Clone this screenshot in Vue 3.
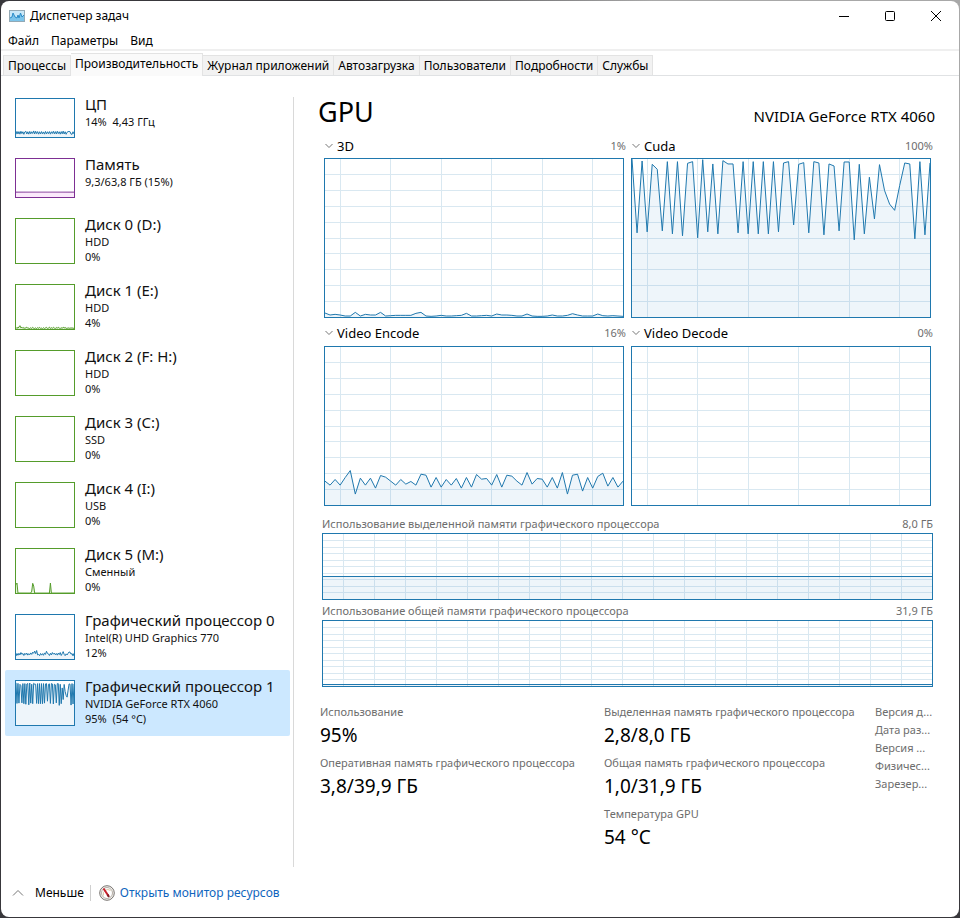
<script setup>
import { ref } from 'vue'

// Charts share one coordinate space: 59 steps across, 477 units down from the top edge.
const SPAN = 59
const DEPTH = 477

const cuda = [0, 223, 6, 220, 16, 31, 217, 8, 226, 8, 232, 13, 8, 238, 2, 220, 15, 226, 5, 15, 15, 223, 8, 226, 8, 226, 8, 226, 8, 220, 12, 8, 199, 16, 11, 223, 8, 12, 229, 15, 21, 217, 9, 9, 244, 16, 226, 55, 181, 17, 95, 136, 155, 80, 12, 15, 241, 8, 229, 12]
const encode = [405, 417, 400, 417, 394, 373, 444, 396, 417, 396, 426, 388, 393, 405, 417, 400, 414, 406, 417, 384, 387, 423, 394, 423, 400, 417, 397, 426, 394, 423, 385, 399, 397, 417, 385, 423, 387, 390, 405, 417, 379, 414, 397, 399, 423, 394, 426, 379, 444, 387, 384, 435, 394, 426, 391, 381, 420, 394, 423, 405]
const fromHeights = (list) => list.map((h) => DEPTH - h)
const render3d = fromHeights([12, 6, 8, 6, 3, 3, 14, 3, 8, 6, 6, 14, 3, 4, 5, 5, 5, 5, 11, 14, 3, 2, 3, 5, 3, 3, 4, 5, 11, 3, 3, 4, 5, 3, 9, 6, 6, 5, 3, 3, 9, 3, 2, 2, 3, 6, 3, 3, 5, 10, 6, 3, 3, 3, 9, 4, 3, 4, 3, 2])
const cpu = fromHeights([34, 70, 38, 68, 36, 72, 42, 66, 34, 64, 72, 38, 66, 36, 70, 40, 66, 44, 76, 38, 72, 42, 68, 36, 66, 38, 68, 40, 64, 36, 70, 38, 66, 42, 68, 36, 66, 44, 72, 40, 68, 38, 72, 42, 66, 36, 68, 40, 74, 38, 66, 34, 60, 68, 70, 66, 36, 34, 66, 38])
const uhd = fromHeights([32, 60, 40, 62, 44, 70, 50, 60, 38, 62, 48, 64, 42, 58, 46, 66, 50, 74, 62, 86, 58, 92, 44, 50, 36, 60, 42, 58, 40, 66, 50, 84, 60, 56, 38, 62, 44, 70, 52, 64, 46, 60, 42, 64, 48, 70, 38, 58, 80, 50, 36, 56, 44, 62, 76, 74, 52, 60, 34, 62])
const diskE = fromHeights([4, 18, 8, 22, 36, 12, 20, 8, 16, 6, 14, 20, 8, 10, 4, 14, 6, 18, 8, 6, 12, 4, 16, 8, 18, 6, 10, 4, 14, 6, 12, 18, 6, 10, 20, 6, 14, 8, 18, 10, 6, 16, 8, 20, 10, 6, 14, 6, 20, 12, 16, 8, 6, 14, 6, 12, 8, 14, 6, 10])
const diskM = fromHeights(Array.from({ length: 60 }, (_, i) => ({ 0: 90, 1: 108, 16: 20, 17: 105, 18: 75, 35: 108 })[i] ?? 0))
const flat = (depth) => Array(60).fill(depth)

const line = (points) => 'M' + points.map((y, x) => `${x} ${y}`).join('L')
const area = (points) => `${line(points)}L${SPAN} ${DEPTH}L0 ${DEPTH}Z`

const grid = (first, step) => {
  let d = ''
  for (let x = first; x < SPAN; x += step) d += `M${x} 0V${DEPTH}`
  for (let i = 1; i < 10; i++) d += `M0 ${(DEPTH * i) / 10}H${SPAN}`
  return d
}
const engineGrid = grid(3, 10)
const memoryGrid = grid(2, 3)

const menus = ['Файл', 'Параметры', 'Вид']
const tabs = ['Процессы', 'Производительность', 'Журнал приложений', 'Автозагрузка', 'Пользователи', 'Подробности', 'Службы']
const activeTab = ref(1)

const devices = [
  { name: 'ЦП', lines: ['14%  4,43 ГГц'], kind: 'blue', data: cpu },
  { name: 'Память', lines: ['9,3/63,8 ГБ (15%)'], kind: 'purple', data: flat(416) },
  { name: 'Диск 0 (D:)', lines: ['HDD', '0%'], kind: 'green' },
  { name: 'Диск 1 (E:)', lines: ['HDD', '4%'], kind: 'green', data: diskE },
  { name: 'Диск 2 (F: H:)', lines: ['HDD', '0%'], kind: 'green' },
  { name: 'Диск 3 (C:)', lines: ['SSD', '0%'], kind: 'green' },
  { name: 'Диск 4 (I:)', lines: ['USB', '0%'], kind: 'green' },
  { name: 'Диск 5 (M:)', lines: ['Сменный', '0%'], kind: 'green', data: diskM },
  { name: 'Графический процессор 0', lines: ['Intel(R) UHD Graphics 770', '12%'], kind: 'blue', data: uhd },
  { name: 'Графический процессор 1', lines: ['NVIDIA GeForce RTX 4060', '95%  (54 °C)'], kind: 'blue', data: cuda.map((y) => y + 20) },
]
const activeDevice = ref(9)

const engines = [
  { name: '3D', load: '1%', data: render3d },
  { name: 'Cuda', load: '100%', data: cuda },
  { name: 'Video Encode', load: '16%', data: encode },
  { name: 'Video Decode', load: '0%' },
]
const memory = [
  { name: 'Использование выделенной памяти графического процессора', max: '8,0 ГБ', data: flat(312) },
  { name: 'Использование общей памяти графического процессора', max: '31,9 ГБ', data: flat(463) },
]
const stats = [
  [
    ['Использование', '95%'],
    ['Оперативная память графического процессора', '3,8/39,9 ГБ'],
  ],
  [
    ['Выделенная память графического процессора', '2,8/8,0 ГБ'],
    ['Общая память графического процессора', '1,0/31,9 ГБ'],
    ['Температура GPU', '54 °C'],
  ],
]
const details = ['Версия д...', 'Дата раз...', 'Версия ...', 'Физичес...', 'Зарезер...']
</script>

<template>
  <div class="desktop">
    <div class="window">
      <header class="titlebar">
        <svg class="app-icon" viewBox="0 0 16 12">
          <rect x="0.5" y="0.5" width="15" height="11" fill="#c9e8f8" stroke="#93a9b5" />
          <path d="M1 8L3 7L4 3L6 7L8 8L9 5L10 8L11.500 3L13 7L15 5V11H1Z" fill="#7cc4ea" />
          <path d="M1 8L3 7L4 3L6 7L8 8L9 5L10 8L11.500 3L13 7L15 5" fill="none" stroke="#2a8cc8" />
        </svg>
        <span class="caption">Диспетчер задач</span>
        <button class="sys" aria-label="Свернуть">
          <svg viewBox="0 0 12 12"><path d="M1 6.500H11" /></svg>
        </button>
        <button class="sys" aria-label="Развернуть">
          <svg viewBox="0 0 12 12"><rect x="1.500" y="1.500" width="9" height="9" rx="1" /></svg>
        </button>
        <button class="sys" aria-label="Закрыть">
          <svg viewBox="0 0 12 12"><path d="M1 1L11 11M11 1L1 11" /></svg>
        </button>
      </header>

      <nav class="menu">
        <button v-for="m in menus" :key="m">{{ m }}</button>
      </nav>

      <div class="tabs" role="tablist">
        <button
          v-for="(t, i) in tabs"
          :key="t"
          role="tab"
          :aria-selected="i === activeTab"
          :class="['tab', { active: i === activeTab }]"
          @click="activeTab = i"
        >{{ t }}</button>
      </div>

      <div class="body">
        <aside class="sidebar">
          <button
            v-for="(d, i) in devices"
            :key="d.name"
            :class="['device', { selected: i === activeDevice }]"
            @click="activeDevice = i"
          >
            <span :class="['thumb', d.kind, { short: d.lines.length === 1 }]">
              <svg v-if="d.data" viewBox="0 0 59 477" preserveAspectRatio="none">
                <path class="area" :d="area(d.data)" />
                <path class="line" :d="line(d.data)" />
              </svg>
            </span>
            <span class="device-text">
              <span class="device-name">{{ d.name }}</span>
              <span v-for="l in d.lines" :key="l" class="device-line">{{ l }}</span>
            </span>
          </button>
        </aside>

        <main class="main">
          <div class="heading">
            <h1>GPU</h1>
            <span class="model">NVIDIA GeForce RTX 4060</span>
          </div>

          <section class="engines">
            <div v-for="e in engines" :key="e.name" class="engine">
              <div class="engine-head">
                <button class="engine-pick">
                  <svg viewBox="0 0 8 6"><path d="M0.500 1L4 4.500L7.500 1" /></svg>
                  {{ e.name }}
                </button>
                <span class="load">{{ e.load }}</span>
              </div>
              <div class="chart blue">
                <svg viewBox="0 0 59 477" preserveAspectRatio="none">
                  <path v-if="e.data" class="area" :d="area(e.data)" />
                  <path class="grid" :d="engineGrid" />
                  <path v-if="e.data" class="line" :d="line(e.data)" />
                </svg>
              </div>
            </div>
          </section>

          <section v-for="m in memory" :key="m.name" class="memory">
            <div class="memory-head">
              <span>{{ m.name }}</span>
              <span>{{ m.max }}</span>
            </div>
            <div class="chart low blue">
              <svg viewBox="0 0 59 477" preserveAspectRatio="none">
                <path class="area" :d="area(m.data)" />
                <path class="grid" :d="memoryGrid" />
                <path class="line level" :d="line(m.data)" />
              </svg>
            </div>
          </section>

          <section class="stats">
            <dl v-for="(col, c) in stats" :key="c">
              <template v-for="s in col" :key="s[0]">
                <dt>{{ s[0] }}</dt>
                <dd>{{ s[1] }}</dd>
              </template>
            </dl>
            <ul>
              <li v-for="d in details" :key="d">{{ d }}</li>
            </ul>
          </section>
        </main>
      </div>

      <footer class="footer">
        <button class="less">
          <svg viewBox="0 0 12 8"><path d="M1 6.500L6 1.500L11 6.500" /></svg>
          Меньше
        </button>
        <a class="monitor" href="#">
          <svg viewBox="0 0 16 16">
            <circle cx="8" cy="8" r="7.300" fill="#f4f2ef" stroke="#77736f" />
            <circle cx="8" cy="8" r="5.500" fill="#fff" stroke="#b5aea6" />
            <path d="M4.500 10.500A4.500 4.500 0 0 1 11.500 5.500" fill="none" stroke="#d8c9a6" />
            <path d="M4.500 3.500L9.500 11" stroke="#c8202c" stroke-width="2" />
            <path d="M8.500 9.500L10 12" stroke="#7d1b22" stroke-width="2" />
          </svg>
          Открыть монитор ресурсов
        </a>
      </footer>
    </div>
  </div>
</template>

<style>
body {
  background: #38373b;
}
</style>

<style scoped>
* {
  box-sizing: border-box;
}
.desktop {
  display: flex;
  min-height: 100vh;
  padding: 1px;
  background: linear-gradient(to bottom left, #a8a8a8 0, #a8a8a8 16%, #38373b 32%);
  font-family: "Noto Sans", "Open Sans", sans-serif;
  font-size: 12px;
  line-height: 16px;
  color: #000;
}
.window {
  flex: 1;
  display: flex;
  flex-direction: column;
  min-width: 0;
  background: #fff;
  border-radius: 8px;
  overflow: hidden;
}
button {
  margin: 0;
  padding: 0;
  border: 0;
  background: none;
  font: inherit;
  color: inherit;
  text-align: left;
}
svg {
  display: block;
}
.titlebar {
  display: flex;
  align-items: center;
  height: 30px;
  padding-left: 8px;
}
.app-icon {
  width: 16px;
  height: 12px;
}
.caption {
  flex: 1;
  margin-left: 5px;
}
.sys {
  display: grid;
  place-items: center;
  width: 46px;
  height: 30px;
}
.sys svg {
  width: 12px;
  height: 12px;
  fill: none;
  stroke: #000;
}
.menu {
  display: flex;
  gap: 12px;
  height: 20px;
  padding: 1px 7px 0;
  border-bottom: 2px solid #efefef;
}
.tabs {
  display: flex;
  align-items: flex-end;
  height: 25px;
  padding-left: 2px;
  border-bottom: 1px solid #e0e2e4;
}
.tab {
  height: 20px;
  padding: 0 4px;
  background: #f2f2f2;
  border: 1px solid #e3e3e3;
  border-bottom: 0;
  border-left-width: 0;
}
.tab:first-child {
  border-left-width: 1px;
}
.tab.active {
  height: 23px;
  padding: 0 4px 3px;
  margin-bottom: -1px;
  background: #fafafa;
}
.body {
  flex: 1;
  display: flex;
  padding-top: 12px;
}
.sidebar {
  flex: 0 0 289px;
  padding-left: 4px;
}
.device {
  display: flex;
  align-items: flex-start;
  gap: 10px;
  width: 100%;
  padding: 6px 10px 9px;
  border-radius: 2px;
}
.device.selected {
  background: #cce8ff;
}
.thumb {
  flex: none;
  width: 60px;
  height: 46px;
  margin: 4px 0 1px;
  border: 1px solid currentColor;
  background: #fff;
}
.thumb.short {
  height: 40px;
}
.blue {
  color: #1f78ae;
  --area: #eef5fa;
}
.purple {
  color: #7d2f93;
  --area: #fbe9fb;
}
.green {
  color: #559c2b;
  --area: #e4f3da;
}
.thumb svg,
.chart svg {
  width: 100%;
  height: 100%;
}
.area {
  fill: var(--area);
}
.line {
  fill: none;
  stroke: currentColor;
  vector-effect: non-scaling-stroke;
}
.level {
  shape-rendering: crispEdges;
}
.grid {
  fill: none;
  stroke: #1f78ae;
  stroke-opacity: 0.17;
  vector-effect: non-scaling-stroke;
  shape-rendering: crispEdges;
}
.device-text {
  display: flex;
  flex-direction: column;
  min-width: 0;
  color: #111;
  white-space: pre;
}
.device-name {
  font-size: 15px;
  line-height: 20px;
}
.device-line {
  font-size: 11px;
  line-height: 15px;
}
.main {
  flex: 1;
  min-width: 0;
  margin: 9px 0 0 3px;
  padding: 0 26px 0 28px;
  border-left: 1px solid #d9d9d9;
}
.heading {
  display: flex;
  align-items: baseline;
  justify-content: space-between;
  height: 40px;
  margin: -3px -2px 0 -4px;
}
h1 {
  margin: 0;
  font-size: 27px;
  font-weight: 400;
  line-height: 36px;
}
.model {
  font-size: 15px;
}
.engines {
  display: grid;
  grid-template-columns: 1fr 1fr;
  column-gap: 3px;
}
.engine-head {
  display: flex;
  align-items: center;
  justify-content: space-between;
  height: 24px;
  margin-left: 3px;
}
.engine + .engine + .engine .engine-head {
  height: 28px;
  padding-top: 2px;
}
.engine-pick {
  display: flex;
  align-items: center;
  gap: 4px;
  font-size: 13px;
}
.engine-pick svg {
  width: 8px;
  height: 6px;
  fill: none;
  stroke: #777;
}
.load {
  font-size: 11px;
  color: #6d6d6d;
}
.chart {
  height: 160px;
  margin: 0 2px;
  border: 1px solid currentColor;
}
.chart.low {
  height: 67px;
  margin: 0;
}
.memory-head {
  display: flex;
  justify-content: space-between;
  height: 20px;
  font-size: 11px;
  line-height: 22px;
  color: #6d6d6d;
}
.engines + .memory {
  padding-top: 7px;
}
.stats {
  display: grid;
  grid-template-columns: 284fr 271fr 58fr;
  margin: 16px 0 0 -2px;
}
dl,
ul {
  min-width: 0;
  margin: 0;
  padding: 0;
  list-style: none;
  white-space: nowrap;
}
dt,
li {
  font-size: 11px;
  line-height: 18px;
  color: #6d6d6d;
}
dd {
  margin: 0 0 5px;
  font-size: 19px;
  line-height: 28px;
}
.footer {
  display: flex;
  align-items: center;
  height: 50px;
  padding: 2px 0 0 11px;
}
.less {
  display: flex;
  align-items: center;
  gap: 11px;
  padding-right: 6px;
  border-right: 1px solid #cfcfcf;
}
.less svg {
  width: 12px;
  height: 8px;
  fill: none;
  stroke: #777;
}
.monitor {
  display: flex;
  align-items: center;
  gap: 5px;
  margin-left: 8px;
  color: #0f65bd;
  text-decoration: none;
}
.monitor svg {
  width: 16px;
  height: 16px;
}
</style>
